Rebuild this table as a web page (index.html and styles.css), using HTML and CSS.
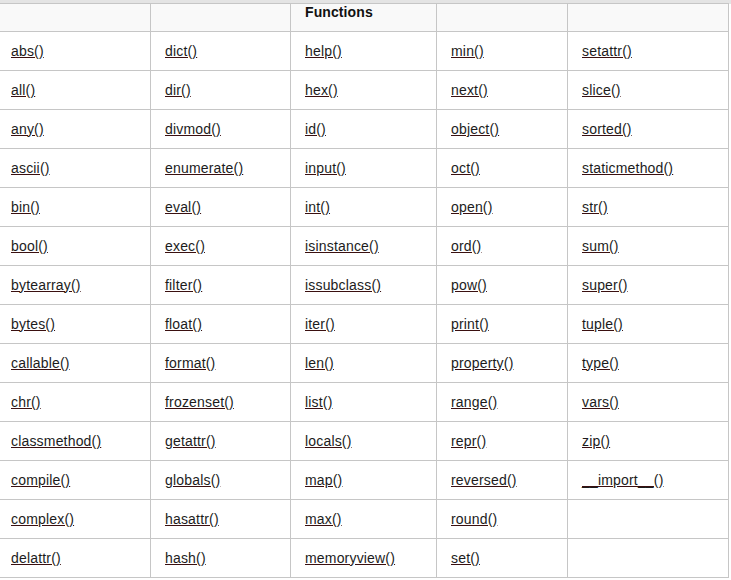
FILE: index.html
```html
<!DOCTYPE html>
<html>
<head>
<meta charset="utf-8">
<link rel="stylesheet" href="styles.css">
</head>
<body>
<div class="topband"></div>
<table class="fn">
<colgroup>
<col class="c1"><col class="c2"><col class="c3"><col class="c4"><col class="c5">
</colgroup>
<thead>
<tr><th></th><th></th><th>Functions</th><th></th><th></th></tr>
</thead>
<tbody>
<tr><td><a href="#">abs()</a></td><td><a href="#">dict()</a></td><td><a href="#">help()</a></td><td><a href="#">min()</a></td><td><a href="#">setattr()</a></td></tr>
<tr><td><a href="#">all()</a></td><td><a href="#">dir()</a></td><td><a href="#">hex()</a></td><td><a href="#">next()</a></td><td><a href="#">slice()</a></td></tr>
<tr><td><a href="#">any()</a></td><td><a href="#">divmod()</a></td><td><a href="#">id()</a></td><td><a href="#">object()</a></td><td><a href="#">sorted()</a></td></tr>
<tr><td><a href="#">ascii()</a></td><td><a href="#">enumerate()</a></td><td><a href="#">input()</a></td><td><a href="#">oct()</a></td><td><a href="#">staticmethod()</a></td></tr>
<tr><td><a href="#">bin()</a></td><td><a href="#">eval()</a></td><td><a href="#">int()</a></td><td><a href="#">open()</a></td><td><a href="#">str()</a></td></tr>
<tr><td><a href="#">bool()</a></td><td><a href="#">exec()</a></td><td><a href="#">isinstance()</a></td><td><a href="#">ord()</a></td><td><a href="#">sum()</a></td></tr>
<tr><td><a href="#">bytearray()</a></td><td><a href="#">filter()</a></td><td><a href="#">issubclass()</a></td><td><a href="#">pow()</a></td><td><a href="#">super()</a></td></tr>
<tr><td><a href="#">bytes()</a></td><td><a href="#">float()</a></td><td><a href="#">iter()</a></td><td><a href="#">print()</a></td><td><a href="#">tuple()</a></td></tr>
<tr><td><a href="#">callable()</a></td><td><a href="#">format()</a></td><td><a href="#">len()</a></td><td><a href="#">property()</a></td><td><a href="#">type()</a></td></tr>
<tr><td><a href="#">chr()</a></td><td><a href="#">frozenset()</a></td><td><a href="#">list()</a></td><td><a href="#">range()</a></td><td><a href="#">vars()</a></td></tr>
<tr><td><a href="#">classmethod()</a></td><td><a href="#">getattr()</a></td><td><a href="#">locals()</a></td><td><a href="#">repr()</a></td><td><a href="#">zip()</a></td></tr>
<tr><td><a href="#">compile()</a></td><td><a href="#">globals()</a></td><td><a href="#">map()</a></td><td><a href="#">reversed()</a></td><td><a href="#">__import__()</a></td></tr>
<tr><td><a href="#">complex()</a></td><td><a href="#">hasattr()</a></td><td><a href="#">max()</a></td><td><a href="#">round()</a></td><td></td></tr>
<tr><td><a href="#">delattr()</a></td><td><a href="#">hash()</a></td><td><a href="#">memoryview()</a></td><td><a href="#">set()</a></td><td></td></tr>
</tbody>
</table>
</body>
</html>
```
FILE: styles.css
```css
html, body {
  margin: 0;
  padding: 0;
  background: #ffffff;
  overflow: hidden;
}
body {
  font-family: "Liberation Sans", Arial, sans-serif;
  font-size: 14px;
  color: #1c1c1c;
}
.topband {
  height: 4px;
  background: #e4e4e4;
}
.fn {
  border-collapse: collapse;
  table-layout: fixed;
  width: 732px;
  margin-left: -4px;
  margin-top: -1px;
}
.c1 { width: 154px; }
.c2 { width: 140px; }
.c3 { width: 146px; }
.c4 { width: 131px; }
.c5 { width: 161px; }
.fn th, .fn td {
  border: 1px solid #c6c6c6;
  text-align: left;
  padding: 0 0 0 14px;
}
.fn th {
  background: #f9f9f9;
  height: 27px;
  vertical-align: top;
  padding-top: 0;
  font-weight: bold;
  color: #111;
  line-height: 17px;
  letter-spacing: 0.1px;
}
.fn td {
  height: 38px;
  vertical-align: middle;
  line-height: 17px;
  letter-spacing: 0.18px;
}
.fn a {
  color: #1c1c1c;
  text-decoration: underline;
  text-decoration-color: #3a1010;
}
```
